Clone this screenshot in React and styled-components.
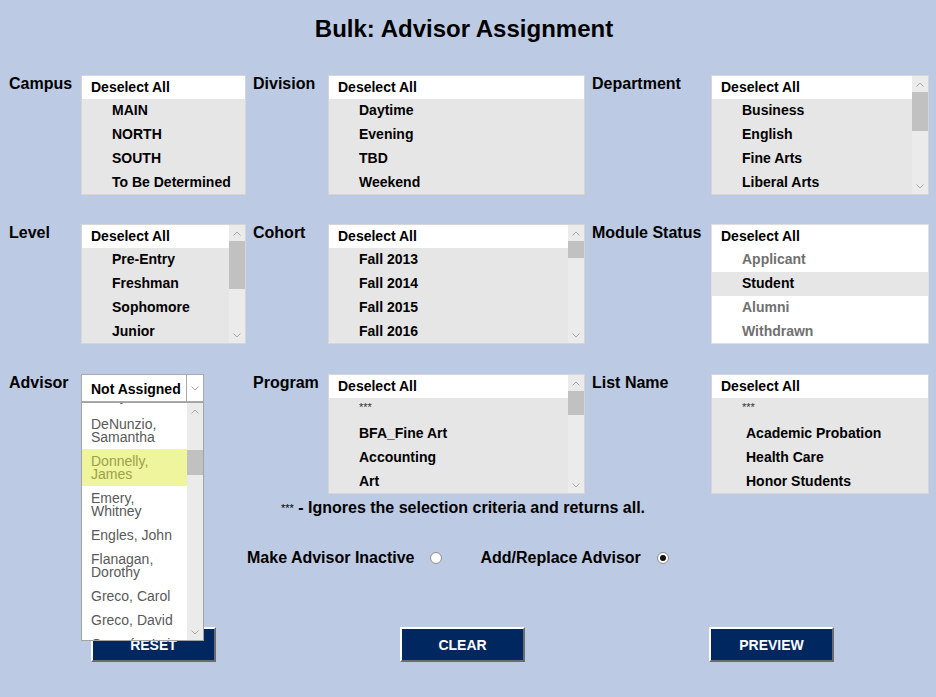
import React from "react";
import styled, { createGlobalStyle } from "styled-components";

const Global = createGlobalStyle`
  html, body { margin: 0; padding: 0; }
  body {
    background: #bccbe3;
    font-family: "Liberation Sans", Arial, sans-serif;
    color: #000;
  }
`;

const Page = styled.div`
  width: 936px;
  height: 697px;
  box-sizing: border-box;
  padding-left: 9px;
  overflow: hidden;
`;

const Title = styled.h1`
  width: 910px;
  margin: 15px 0 32px;
  font-size: 24px;
  line-height: 28px;
  font-weight: bold;
  text-align: center;
`;

const Rows = styled.div`
  display: flex;
  flex-direction: column;
  gap: 29px;
`;

const FieldRow = styled.div`
  display: flex;
  gap: 7px;
  align-items: flex-start;
  margin-top: ${(p) => p.$extra ?? 0}px;
`;

const Field = styled.div`
  display: flex;
  align-items: flex-start;
`;

const Label = styled.div`
  width: ${(p) => p.$w}px;
  flex: none;
  font-size: 16px;
  line-height: 18px;
  font-weight: bold;
  margin-left: ${(p) => p.$offset ?? 0}px;
`;

const ListBox = styled.div`
  width: ${(p) => p.$w}px;
  height: 120px;
  box-sizing: border-box;
  border: 1px solid ${(p) => (p.$white ? "#dedede" : "#d6d6d6")};
  background: ${(p) => (p.$white ? "#fff" : "#e6e6e6")};
  display: flex;
  overflow: hidden;
  flex: none;
`;

const ListCol = styled.div`
  flex: 1;
  display: flex;
  flex-direction: column;
  min-width: 0;
`;

const Header = styled.div`
  height: 23px;
  line-height: 23px;
  background: #fff;
  padding-left: 9px;
  font-size: 14px;
  font-weight: bold;
  flex: none;
`;

const Item = styled.div`
  height: 24px;
  line-height: 22px;
  flex: none;
  padding-left: ${(p) => p.$indent ?? 30}px;
  font-size: 14px;
  font-weight: bold;
  white-space: nowrap;
  color: ${(p) => (p.$muted ? "#707070" : "#000")};
  background: ${(p) => (p.$selected ? "#e6e6e6" : "transparent")};
`;

const Stars = styled.div`
  height: 24px;
  line-height: 18px;
  flex: none;
  padding-left: 30px;
  font-size: 11px;
  color: #333;
`;

const Bar = styled.div`
  width: 16px;
  flex: none;
  background: #ebebeb;
  display: flex;
  flex-direction: column;
  align-items: center;
`;

const Arrow = styled.div`
  height: 16px;
  width: 16px;
  flex: none;
  display: flex;
  align-items: center;
  justify-content: center;
  margin-top: ${(p) => (p.$bottom ? "auto" : "0")};
`;

const Thumb = styled.div`
  width: 16px;
  flex: none;
  background: #c1c1c1;
  margin-top: ${(p) => p.$top}px;
  height: ${(p) => p.$h}px;
`;

const Chevron = ({ down }) => (
  <svg width="8" height="5" viewBox="0 0 8 5">
    <polyline
      points={down ? "0.5,0.5 4,4 7.5,0.5" : "0.5,4.5 4,1 7.5,4.5"}
      fill="none"
      stroke="#a6a6a6"
      strokeWidth="1"
    />
  </svg>
);

const ScrollBar = ({ top = 0, h }) => (
  <Bar>
    <Arrow>
      <Chevron />
    </Arrow>
    <Thumb $top={top} $h={h} />
    <Arrow $bottom>
      <Chevron down />
    </Arrow>
  </Bar>
);

const List = ({ w, items, scroll, white, indent, stars, mutedAll, selected }) => (
  <ListBox $w={w} $white={white}>
    <ListCol>
      <Header>Deselect All</Header>
      {stars && <Stars>***</Stars>}
      {items.map((it) => (
        <Item
          key={it}
          $indent={indent}
          $muted={mutedAll && it !== selected}
          $selected={it === selected}
        >
          {it}
        </Item>
      ))}
    </ListCol>
    {scroll && <ScrollBar top={scroll.top} h={scroll.h} />}
  </ListBox>
);

/* Advisor combobox */
const Combo = styled.div`
  position: relative;
  display: flex;
  width: 123px;
  height: 28px;
  flex: none;
`;

const ComboInput = styled.div`
  width: 106px;
  box-sizing: border-box;
  border: 1px solid #a9a9a9;
  background: #fff;
  padding-left: 9px;
  font-size: 14px;
  font-weight: bold;
  line-height: 28px;
`;

const ComboButton = styled.div`
  width: 17px;
  box-sizing: border-box;
  border: 1px solid #a9a9a9;
  border-left: none;
  background: #fff;
  display: flex;
  align-items: center;
  justify-content: center;
`;

const Dropdown = styled.div`
  position: absolute;
  top: 28px;
  left: 0;
  width: 123px;
  height: 239px;
  box-sizing: border-box;
  border: 1px solid #a3a3a3;
  background: #fff;
  display: flex;
  overflow: hidden;
  z-index: 5;
`;

const DropList = styled.div`
  flex: 1;
  overflow: hidden;
`;

const DropInner = styled.div`
  margin-top: -19px;
`;

const DropItem = styled.div`
  padding: 6px 4px ${(p) => p.$pb ?? 5}px 9px;
  font-size: 14px;
  line-height: 13px;
  color: ${(p) => (p.$hl ? "#9ba04c" : "#595959")};
  background: ${(p) => (p.$hl ? "#eef59c" : "#fff")};
`;

const advisors = [
  ["Daley, Tom"],
  ["DeNunzio,", "Samantha"],
  ["Donnelly,", "James"],
  ["Emery,", "Whitney"],
  ["Engles, John"],
  ["Flanagan,", "Dorothy"],
  ["Greco, Carol"],
  ["Greco, David"],
  ["Guzmán, Luis"],
];

/* Footer */
const Note = styled.div`
  width: 908px;
  margin-top: 5px;
  text-align: center;
  font-size: 16px;
  line-height: 18px;
  font-weight: bold;
`;

const SmallStars = styled.span`
  font-size: 11px;
  font-weight: normal;
  vertical-align: text-top;
`;

const RadioRow = styled.div`
  display: flex;
  align-items: center;
  height: 18px;
  margin-top: 32px;
  padding-left: 238px;
`;

const RadioLabel = styled.span`
  font-size: 16px;
  font-weight: bold;
  line-height: 18px;
  margin-left: ${(p) => p.$gap ?? 0}px;
`;

const Radio = styled.span`
  width: 12px;
  height: 12px;
  box-sizing: border-box;
  border-radius: 50%;
  border: 1px solid #8c8c8c;
  background: #fff;
  margin-left: 16px;
  display: flex;
  align-items: center;
  justify-content: center;
  &::after {
    content: "";
    width: 6px;
    height: 6px;
    border-radius: 50%;
    background: ${(p) => (p.$checked ? "#111" : "transparent")};
  }
`;

const ButtonRow = styled.div`
  display: flex;
  gap: 184px;
  margin-top: 60px;
  padding-left: 82px;
`;

const Button = styled.button`
  width: 125px;
  height: 35px;
  box-sizing: border-box;
  background: #00275f;
  color: #fff;
  font-family: "Liberation Sans", Arial, sans-serif;
  font-size: 14px;
  font-weight: bold;
  border-top: 2px solid #fff;
  border-left: 2px solid #fff;
  border-right: 2px solid #6b6b6b;
  border-bottom: 2px solid #6b6b6b;
  padding: 1px 0 0;
  cursor: pointer;
`;

export default function App() {
  return (
    <Page>
      <Global />
      <Title>Bulk: Advisor Assignment</Title>
      <Rows>
        <FieldRow>
          <Field>
            <Label $w={72}>Campus</Label>
            <List w={165} items={["MAIN", "NORTH", "SOUTH", "To Be Determined"]} />
          </Field>
          <Field>
            <Label $w={75}>Division</Label>
            <List w={257} items={["Daytime", "Evening", "TBD", "Weekend"]} />
          </Field>
          <Field>
            <Label $w={119}>Department</Label>
            <List
              w={218}
              items={["Business", "English", "Fine Arts", "Liberal Arts"]}
              scroll={{ top: 0, h: 39 }}
            />
          </Field>
        </FieldRow>

        <FieldRow>
          <Field>
            <Label $w={72}>Level</Label>
            <List
              w={165}
              items={["Pre-Entry", "Freshman", "Sophomore", "Junior"]}
              scroll={{ top: 0, h: 48 }}
            />
          </Field>
          <Field>
            <Label $w={75}>Cohort</Label>
            <List
              w={257}
              items={["Fall 2013", "Fall 2014", "Fall 2015", "Fall 2016"]}
              scroll={{ top: 0, h: 17 }}
            />
          </Field>
          <Field>
            <Label $w={119}>Module Status</Label>
            <List
              w={218}
              white
              mutedAll
              selected="Student"
              items={["Applicant", "Student", "Alumni", "Withdrawn"]}
            />
          </Field>
        </FieldRow>

        <FieldRow $extra={1}>
          <Field>
            <Label $w={72}>Advisor</Label>
            <Combo>
              <ComboInput>Not Assigned</ComboInput>
              <ComboButton>
                <Chevron down />
              </ComboButton>
              <Dropdown>
                <DropList>
                  <DropInner>
                    {advisors.map((lines, idx) => (
                      <DropItem
                        key={lines.join(" ")}
                        $hl={lines[0] === "Donnelly,"}
                        $pb={idx === 0 ? 9 : 5}
                      >
                        {lines.map((l, i) => (
                          <div key={i}>{l}</div>
                        ))}
                      </DropItem>
                    ))}
                  </DropInner>
                </DropList>
                <ScrollBar top={31} h={25} />
              </Dropdown>
            </Combo>
          </Field>
          <Field>
            <Label $w={75} $offset={42}>Program</Label>
            <List
              w={257}
              stars
              items={["BFA_Fine Art", "Accounting", "Art"]}
              scroll={{ top: 0, h: 24 }}
            />
          </Field>
          <Field>
            <Label $w={119}>List Name</Label>
            <List
              w={218}
              stars
              indent={34}
              items={["Academic Probation", "Health Care", "Honor Students"]}
            />
          </Field>
        </FieldRow>
      </Rows>

      <Note>
        <SmallStars>***</SmallStars> - Ignores the selection criteria and returns all.
      </Note>

      <RadioRow>
        <RadioLabel>Make Advisor Inactive</RadioLabel>
        <Radio />
        <RadioLabel $gap={38}>Add/Replace Advisor</RadioLabel>
        <Radio $checked />
      </RadioRow>

      <ButtonRow>
        <Button>RESET</Button>
        <Button>CLEAR</Button>
        <Button>PREVIEW</Button>
      </ButtonRow>
    </Page>
  );
}
